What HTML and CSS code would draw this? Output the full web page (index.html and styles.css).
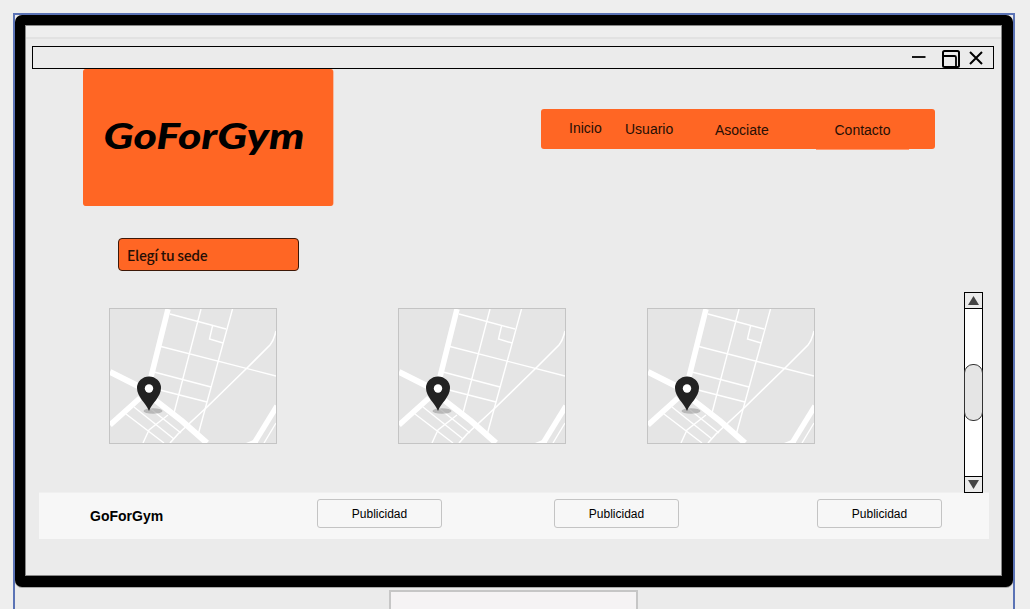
FILE: index.html
```html
<!DOCTYPE html>
<html lang="es">
<head>
<meta charset="utf-8">
<title>GoForGym</title>
<link rel="stylesheet" href="styles.css">
</head>
<body>
<svg class="defs" aria-hidden="true">
  <symbol id="map" viewBox="0 0 166 134">
    <rect width="166" height="134" fill="#e5e5e5"/>
    <g fill="none" stroke="#fff">
      <g stroke-width="1.400">
        <path d="M60 5 116 20M51 37.500 166 67M44 63 101 78M50 81 97 93M91 0 64 104M122.500 0 88 126M102.500 17 99.500 30 113 34"/>
        <path d="M166 22Q164 31 160 36L137 59 96 99 68 125 60 134" stroke-width="1.600"/>
        <path d="M24 98 64 130M16 105 54 134M37 97 71 124M58 106 39 121 33 134M154 134 166 114"/>
      </g>
      <path d="M58 0 41 68" stroke-width="5.500"/>
      <path d="M0 63 28 77M45 91 72 112 97 134" stroke-width="6"/>
      <path d="M0 116 30 89" stroke-width="5.500"/>
      <path d="M143 136 167 97" stroke-width="5.500"/>
    </g>
    <path fill="#fff" d="M136 134 146 130 148 134Z"/>
    <ellipse cx="43" cy="102" rx="9.500" ry="2.800" fill="#999" opacity=".6"/>
    <path fill="#222" d="M39 102C36 94 27 88 27 79a12 11.500 0 0 1 24 0C51 88 42 94 39 102Z"/>
    <circle cx="39" cy="79.500" r="4.200" fill="#fff"/>
  </symbol>
</svg>
<div class="selection">
  <div class="monitor">
    <div class="screen">
      <div class="menu-strip"></div>
      <div class="titlebar">
        <svg class="window-icons" width="80" height="21" viewBox="0 0 80 21" fill="none" stroke="#000" stroke-width="2">
          <path d="M2 10H15.500" stroke-width="1.800"/>
          <rect x="33" y="4" width="16" height="16" rx="1.500"/>
          <path d="M33 9H44.500Q46 9 46 10.500V20" stroke-width="1.800"/>
          <path d="m60 5 12 12M72 5 60 17"/>
        </svg>
      </div>
      <header class="header">
        <div class="logo">
          <svg width="250" height="137" viewBox="0 0 250 137"><text class="logo-text" x="20.500" y="79.500" textLength="201" lengthAdjust="spacingAndGlyphs">GoForGym</text></svg>
        </div>
        <nav class="nav">
          <a class="nav-item home">Inicio</a>
          <a class="nav-item user">Usuario</a>
          <a class="nav-item join">Asociate</a>
          <a class="nav-item contact">Contacto</a>
        </nav>
      </header>
      <div class="select-branch">Elegí tu sede</div>
      <main class="branches">
        <svg class="map"><use href="#map"/></svg>
        <svg class="map"><use href="#map"/></svg>
        <svg class="map"><use href="#map"/></svg>
        <div class="scrollbar">
          <div class="arrow"><svg width="11" height="10" viewBox="0 0 11 10"><path d="M5.500 0 11 9H0Z"/></svg></div>
          <div class="track"><div class="thumb"></div></div>
          <div class="arrow"><svg width="11" height="10" viewBox="0 0 11 10"><path d="M0 0H11L5.500 9Z"/></svg></div>
        </div>
      </main>
      <footer class="footer">
        <strong class="brand">GoForGym</strong>
        <div class="ad">Publicidad</div>
        <div class="ad">Publicidad</div>
        <div class="ad">Publicidad</div>
      </footer>
    </div>
  </div>
  <div class="stand"></div>
</div>
</body>
</html>
```
FILE: styles.css
```css
* { box-sizing: border-box; }
body {
  margin: 0;
  height: 609px;
  overflow: hidden;
  display: flex;
  background: #eee;
  color: #000;
  font-family: "Liberation Sans", Arial, sans-serif;
}
.defs { display: none; }
.selection {
  width: 1002px;
  height: 610px;
  flex: none;
  margin: 13px 0 0 13px;
  border: 2px solid #5b73b5;
  background: #ebebeb;
}
.monitor {
  height: 572px;
  padding: 10px 11px 11px 10px;
  background: #000;
  border-radius: 7px;
  box-shadow: 0 1px 0 #aaa;
}
.screen {
  height: 551px;
  border: 1px solid #888;
  background: #ebebeb;
}
.menu-strip {
  height: 13px;
  background: #eee;
  border-bottom: 2px solid #e2e2e2;
}
.titlebar {
  display: flex;
  justify-content: flex-end;
  width: 962px;
  height: 23px;
  margin: 7px 0 0 6px;
  border: 1px solid #000;
}
.window-icons { margin-right: 3px; }
.header {
  display: flex;
  height: 137px;
  margin-left: 57px;
}
.logo {
  width: 250px;
  height: 137px;
  background: #ff6624;
  border-radius: 3px;
  box-shadow: 0.5px 0 0 #ff8d5c;
}
.logo svg { display: block; }
.logo-text {
  font: italic 900 36.5px Lato, sans-serif;
}
.nav {
  display: flex;
  width: 394px;
  height: 40px;
  margin: 40px 0 0 208px;
  padding-left: 28px;
  background: #ff6624;
  border-radius: 3px;
  font-size: 14px;
  line-height: 16px;
}
.nav-item { color: #260f05; }
.home { width: 56px; padding-top: 11px; }
.user { width: 90px; padding-top: 12px; }
.join { width: 101px; padding-top: 13px; }
.contact {
  width: 93px;
  height: 41px;
  padding: 13px 0 0 18.5px;
  border-bottom: 1px solid #ff9a70;
}
.select-branch {
  width: 181px;
  height: 33px;
  margin: 32px 0 0 92px;
  padding-left: 8px;
  border: 1px solid #3c1808;
  border-radius: 4px;
  background: #ff6624;
  color: #260f05;
  font: 500 14px/32px "Noto Sans CJK SC", sans-serif;
  letter-spacing: -0.3px;
}
.branches {
  display: flex;
  height: 201px;
  margin: 21px 0 0 83px;
}
.map {
  flex: none;
  width: 168px;
  height: 136px;
  margin-top: 16px;
  border: 1px solid #c4c4c4;
}
.map:nth-child(2) { margin-left: 121px; }
.map:nth-child(3) { margin-left: 81px; }
.scrollbar {
  display: flex;
  flex-direction: column;
  z-index: 1;
  width: 19px;
  height: 201px;
  margin-left: 149px;
  border: 1px solid #000;
  background: #fff;
}
.arrow {
  display: flex;
  justify-content: center;
  align-items: center;
  height: 15px;
  background: #ebebeb;
  fill: #444;
}
.track {
  flex: 1;
  padding-top: 55px;
  border: solid #000;
  border-width: 1px 0;
}
.thumb {
  height: 57px;
  margin: 0 -1px;
  border: 1px solid #333;
  border-radius: 9px;
  background: #e5e5e5;
}
.footer {
  display: flex;
  width: 950px;
  height: 47px;
  margin: -1px 0 0 13px;
  padding: 6px 0 0 51px;
  border-top: 1px solid #f0f0f0;
  background: #f7f7f7;
}
.brand {
  width: 227px;
  padding-top: 9px;
  font-size: 14px;
  line-height: 16px;
}
.ad {
  width: 125px;
  height: 29px;
  border: 1px solid #c4c4c4;
  border-radius: 3px;
  text-align: center;
  font-size: 12px;
  line-height: 28px;
}
.ad + .ad { margin-left: 112px; }
.ad + .ad + .ad { margin-left: 138px; }
.stand {
  width: 249px;
  height: 30px;
  margin: 3px 0 0 374px;
  border: 2px solid #c6c6c6;
  background: #f5f3f4;
}
```
